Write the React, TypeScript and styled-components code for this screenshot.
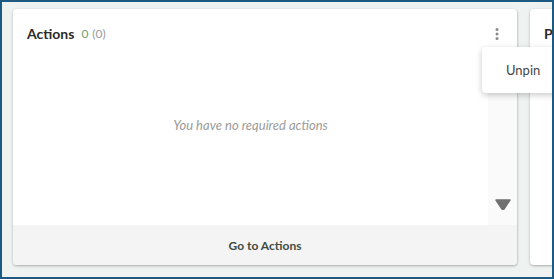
import React from 'react';
import styled, { createGlobalStyle } from 'styled-components';

const GlobalStyle = createGlobalStyle`
    html, body {
        margin: 0;
        padding: 0;
        background: #eef2f0;
    }
    * {
        box-sizing: border-box;
    }
`;

function App() {
  return (
    <>
    <GlobalStyle />
    <Frame>
        <Board>
            <Card $width={504}>
                <Header>
                    <Title>Actions</Title>
                    <Count>0</Count>
                    <Total>(0)</Total>
                    <Kebab aria-label="More">
                        <svg width="4" height="12" viewBox="0 0 4 12">
                            <circle cx="2" cy="1.6" r="1.5" fill="#8a8a8a" />
                            <circle cx="2" cy="6" r="1.5" fill="#8a8a8a" />
                            <circle cx="2" cy="10.4" r="1.5" fill="#8a8a8a" />
                        </svg>
                    </Kebab>
                </Header>
                <Body>
                    <Content>
                        <Empty>You have no required actions</Empty>
                    </Content>
                    <Track>
                        <svg width="16" height="11" viewBox="0 0 16 11">
                            <path d="M1 1 L15 1 L9 10 Q8 11.2 7 10 Z" fill="#707070" stroke="#707070" strokeWidth="1.5" strokeLinejoin="round" />
                        </svg>
                    </Track>
                </Body>
                <Footer>Go to Actions</Footer>
            </Card>
            <Card $width={200}>
                <Header>
                    <Title>Pinned</Title>
                </Header>
            </Card>
        </Board>
        <Menu>
            <MenuItem>Unpin</MenuItem>
        </Menu>
    </Frame>
    </>
  );
}

export default App;


const Frame = styled.div`
    position: relative;
    width: 554px;
    height: 279px;
    border: 2px solid #1c5a82;
    background: #eef2f0;
    overflow: hidden;
    font-family: Lato, "Open Sans", sans-serif;
`;

const Board = styled.div`
    display: flex;
    gap: 13px;
    padding: 7px 0 0 11px;
`;

const Card = styled.section<{ $width: number }>`
    flex: none;
    display: flex;
    flex-direction: column;
    width: ${p => p.$width}px;
    height: 256px;
    background: #ffffff;
    border-radius: 4px;
    box-shadow: 0 1px 3px rgba(0, 0, 0, 0.26), 1px 1px 1px rgba(0, 0, 0, 0.06);
    overflow: hidden;
`;

const Header = styled.header`
    display: flex;
    align-items: center;
    height: 49px;
    padding: 0 18px 0 14px;
`;

const Title = styled.h2`
    margin: 0;
    font-size: 14px;
    font-weight: 700;
    color: #2b2b2b;
`;

const Count = styled.span`
    margin-left: 7px;
    font-size: 12px;
    color: #6d9c72;
`;

const Total = styled.span`
    margin-left: 4px;
    font-size: 12px;
    color: #9a9a9a;
`;

const Kebab = styled.button`
    margin-left: auto;
    display: flex;
    align-items: center;
    padding: 0;
    border: 0;
    background: none;
`;

const Body = styled.div`
    flex: 1;
    display: flex;
`;

const Content = styled.div`
    flex: 1;
    display: flex;
    justify-content: center;
    padding-top: 60px;
`;

const Empty = styled.p`
    margin: 0;
    font-size: 13px;
    line-height: 15px;
    font-style: italic;
    color: #9b9b9b;
`;

const Track = styled.div`
    width: 29px;
    display: flex;
    align-items: flex-end;
    justify-content: center;
    padding-bottom: 15px;
    background: #fafafa;
`;

const Footer = styled.footer`
    height: 40px;
    display: flex;
    align-items: center;
    justify-content: center;
    background: #f4f4f4;
    font-size: 12px;
    font-weight: 700;
    color: #3f4b3e;
`;

const Menu = styled.div`
    position: absolute;
    left: 480px;
    top: 45px;
    width: 90px;
    height: 46px;
    display: flex;
    align-items: center;
    padding-left: 24px;
    background: #ffffff;
    border-radius: 4px;
    box-shadow: 0 2px 6px rgba(0, 0, 0, 0.22);
`;

const MenuItem = styled.span`
    font-size: 13px;
    color: #454545;
`;
